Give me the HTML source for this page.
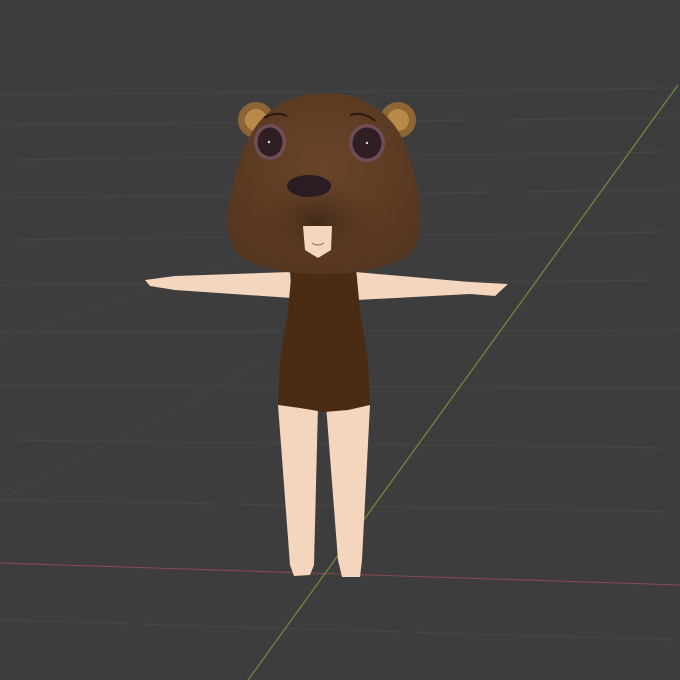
<!DOCTYPE html><html><head><style>body{margin:0;background:#3d3d3d}svg{display:block}</style></head><body>
<svg width="680" height="680" viewBox="0 0 680 680">
<defs><radialGradient id="hg" cx="0.5" cy="0.4" r="0.6"><stop offset="0" stop-color="#6a4429"/><stop offset="1" stop-color="#553620"/></radialGradient>
<radialGradient id="mz" cx="0.5" cy="0.5" r="0.5"><stop offset="0" stop-color="#422a18"/><stop offset="1" stop-color="#5a3a22" stop-opacity="0"/></radialGradient></defs>
<rect width="680" height="680" fill="#3d3d3d"/>
<g stroke="#464646" stroke-width="1" fill="none">
<path d="M0 95 L680 88 M0 125 L680 118 M0 160 L680 152 M0 198 L680 190 M0 240 L680 232 M0 285 L680 280 M0 332 L680 330 M0 385 L680 388 M0 440 L680 448 M0 500 L680 512 M0 620 L680 640"/>
<path d="M0 340 L300 240 M0 500 L270 360"/>
</g>
<line x1="0" y1="563" x2="680" y2="585" stroke="#8a4a4e" stroke-width="1"/>
<line x1="678" y1="85" x2="248" y2="680" stroke="#6a8a3a" stroke-width="1.3"/>
<path d="M145 280 L175 276 L290 272 L292 298 L175 290 L150 286 Z" fill="#f4d5bd"/>
<path d="M355 272 L470 282 L508 284 L495 296 L470 294 L357 300 Z" fill="#f4d5bd"/>
<path d="M278 405 L318 405 L314 565 L310 575 L294 576 L290 565 Z" fill="#f4d5bd"/>
<path d="M326 405 L370 405 L362 560 L360 577 L342 577 L338 560 Z" fill="#f4d5bd"/>
<path d="M292 268 L356 268 L360 310 L368 360 L370 405 L348 410 L324 412 L300 408 L278 405 L280 360 L288 310 Z" fill="#4a2c14"/>
<circle cx="256" cy="120" r="18" fill="#8e6636"/><circle cx="256" cy="120" r="11" fill="#b88a4a"/>
<circle cx="398" cy="120" r="18" fill="#8e6636"/><circle cx="398" cy="120" r="11" fill="#b88a4a"/>
<path d="M325 93 C375 93 402 125 410 160 C418 185 424 215 418 240 C410 262 380 272 330 274 L310 274 C265 272 236 262 230 240 C224 215 232 185 240 160 C250 125 275 93 325 93 Z" fill="url(#hg)"/>
<ellipse cx="318" cy="222" rx="65" ry="42" fill="url(#mz)"/>
<ellipse cx="270" cy="142" rx="16" ry="18" fill="#6e4e58"/><ellipse cx="270" cy="142" rx="12.5" ry="14.5" fill="#2f1f22"/>
<ellipse cx="367" cy="143" rx="18" ry="19" fill="#6e4e58"/><ellipse cx="367" cy="143" rx="14.5" ry="15.5" fill="#2f1f22"/>
<circle cx="269" cy="142" r="1.2" fill="#ddd"/><circle cx="367" cy="143" r="1.2" fill="#ddd"/>
<path d="M264 118 Q276 111 287 116" stroke="#2a1a10" stroke-width="2" fill="none"/>
<path d="M350 115 Q364 111 375 121" stroke="#2a1a10" stroke-width="2" fill="none"/>
<ellipse cx="309" cy="186" rx="22" ry="11" fill="#2a1c22"/>
<path d="M303 226 L332 226 L331 250 L318 258 L305 250 Z" fill="#f4d5bd"/>
<path d="M312 243 Q318 247 324 243" stroke="#a07a60" stroke-width="1.2" fill="none"/>
</svg></body></html>
